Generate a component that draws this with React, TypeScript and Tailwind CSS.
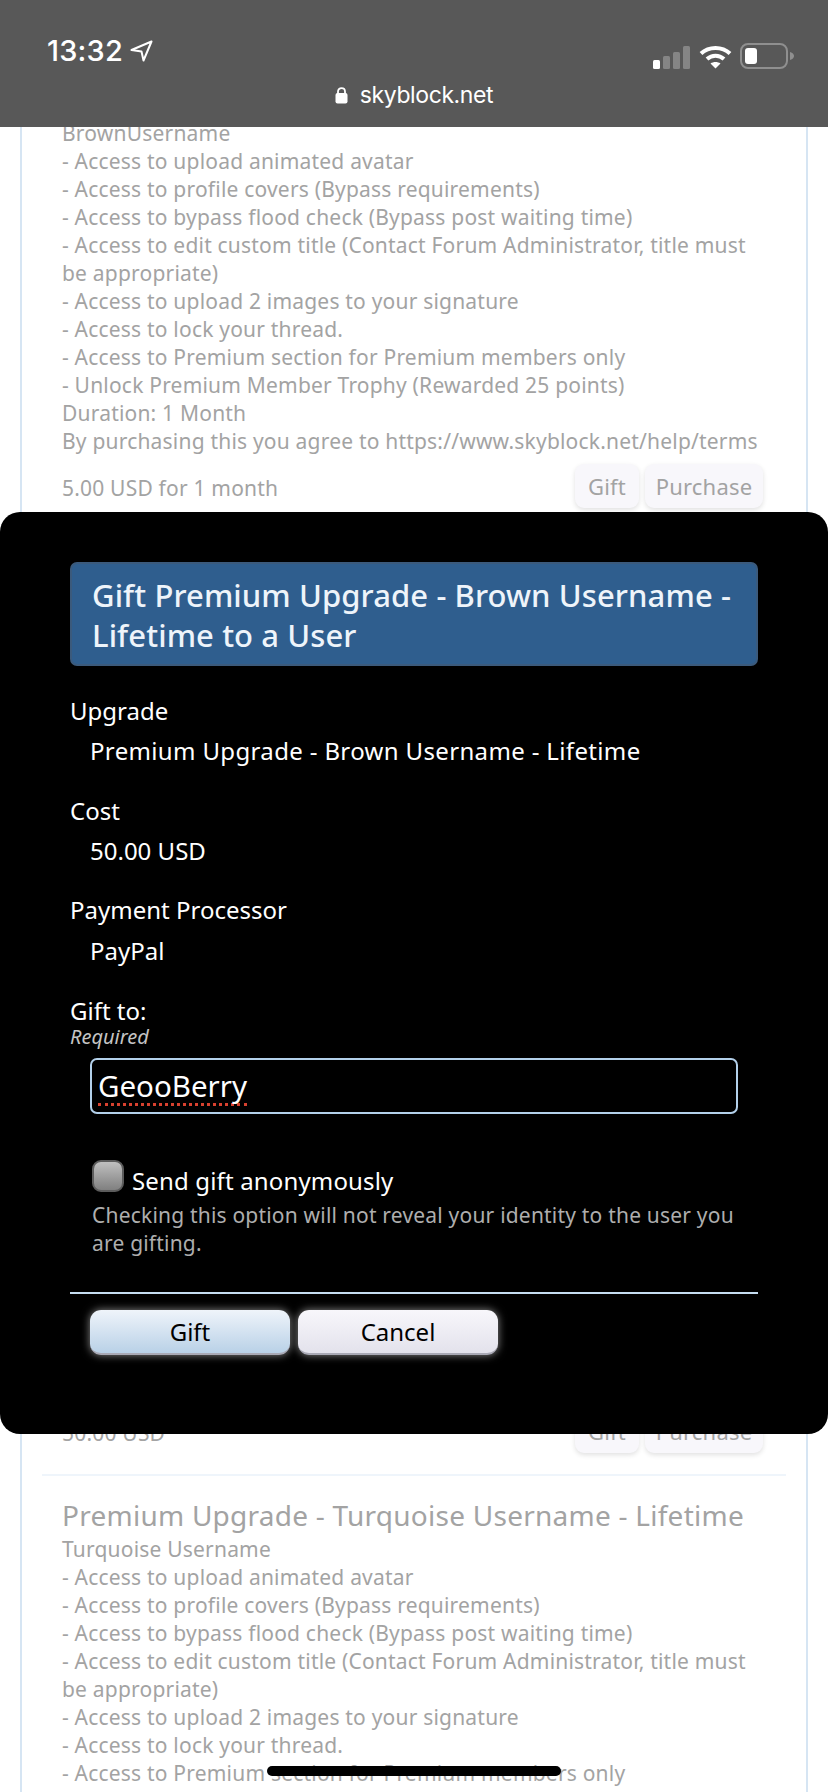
import React from "react";

const perks = [
  "- Access to upload animated avatar",
  "- Access to profile covers (Bypass requirements)",
  "- Access to bypass flood check (Bypass post waiting time)",
  "- Access to edit custom title (Contact Forum Administrator, title must be appropriate)",
  "- Access to upload 2 images to your signature",
  "- Access to lock your thread.",
  "- Access to Premium section for Premium members only",
  "- Unlock Premium Member Trophy (Rewarded 25 points)",
  "Duration: 1 Month",
  "By purchasing this you agree to https://www.skyblock.net/help/terms",
];

const StatusBar = () => (
  <div className="absolute inset-x-0 top-0 z-20 h-[127px] bg-[#585858] text-white">
    <div className="flex h-[76px] items-end justify-between pb-[7px] pl-[47px] pr-[34px]">
      <div className="flex items-center gap-[7px]">
        <span className="font-['Inter',sans-serif] text-[29px] leading-[36px] font-medium">13:32</span>
        <svg width="23" height="22" viewBox="0 0 23 22" fill="none" stroke="white" strokeWidth="2" strokeLinejoin="round">
          <path d="M21.5 1.5 L1.5 10 L11.5 11.5 L13.5 20.5 Z" />
        </svg>
      </div>
      <div className="flex items-end gap-[9px]">
        <svg width="37" height="23" viewBox="0 0 37 23">
          <rect x="0" y="14" width="7" height="9" rx="1.5" fill="white" />
          <rect x="10" y="10" width="7" height="13" rx="1.5" fill="#858585" />
          <rect x="20" y="6" width="7" height="17" rx="1.5" fill="#858585" />
          <rect x="30" y="0" width="7" height="23" rx="1.5" fill="#858585" />
        </svg>
        <svg width="33" height="25" viewBox="0 0 33 25" fill="none" stroke="white" strokeWidth="4">
          <path d="M2 9.5 C10 2 23 2 31 9.5" />
          <path d="M8 15 C13 10.5 20 10.5 25 15" />
          <path d="M16.5 24.5 L11.5 19.5 C14.5 17.5 18.5 17.5 21.5 19.5 Z" fill="white" stroke="none" />
        </svg>
        <svg width="54" height="26" viewBox="0 0 54 26" className="-ml-[1px]">
          <rect x="1" y="1" width="46" height="24" rx="7" fill="none" stroke="#8f8f8f" strokeWidth="2" />
          <rect x="5" y="5" width="12" height="16" rx="3" fill="white" />
          <path d="M50 9 C53 10 54 11.5 54 13 C54 14.5 53 16 50 17 Z" fill="#8f8f8f" />
        </svg>
      </div>
    </div>
    <div className="flex items-center justify-center gap-[12px] pt-[3px]">
      <svg width="13" height="18" viewBox="0 0 13 18" fill="none">
        <path d="M3 8 V5.5 C3 1 10 1 10 5.5 V8" stroke="white" strokeWidth="1.8" />
        <rect x="0.5" y="7" width="12" height="10.5" rx="2" fill="white" />
      </svg>
      <span className="font-['Inter',sans-serif] text-[23px] leading-[32px] tracking-[-0.4px]">skyblock.net</span>
    </div>
  </div>
);

const PerkList = () => (
  <div className="max-w-[705px]">
    {perks.map((line) => (
      <div key={line}>{line}</div>
    ))}
  </div>
);

const PriceRow = ({ price, className }: { price: string; className?: string }) => (
  <div className={`flex h-[44px] items-center justify-between pr-[3px] ${className ?? ""}`}>
    <span className="pt-[3px]">{price}</span>
    <div className="flex gap-[6px] text-[22px]">
      <div className="flex h-[44px] w-[64px] items-center justify-center rounded-[9px] bg-[#f8f7fb] shadow-[0_2px_5px_rgba(0,0,0,0.12)]">Gift</div>
      <div className="flex h-[44px] w-[118px] items-center justify-center rounded-[9px] bg-[#f8f7fb] shadow-[0_2px_5px_rgba(0,0,0,0.12)]">Purchase</div>
    </div>
  </div>
);

const GiftModal = () => (
  <div className="absolute inset-x-0 top-[512px] z-10 h-[922px] rounded-[20px] bg-black px-[70px] pt-[50px] text-[24px] leading-[28px] tracking-normal text-white">
    <h2 className="h-[104px] rounded-[7px] border-2 border-[#3b5a7c] bg-[#2f5e8e] px-[20px] py-[11px] text-[31px] leading-[40px] font-medium tracking-[0.1px] text-[#eef4fa]">
      Gift Premium Upgrade - Brown Username - Lifetime to a User
    </h2>

    <div className="mt-[31px]">Upgrade</div>
    <div className="mt-[12px] pl-[20px] tracking-[0.35px]">Premium Upgrade - Brown Username - Lifetime</div>
    <div className="mt-[32px]">Cost</div>
    <div className="mt-[12px] pl-[20px]">50.00 USD</div>
    <div className="mt-[31px]">Payment Processor</div>
    <div className="mt-[13px] pl-[20px]">PayPal</div>
    <div className="mt-[32px]">Gift to:</div>
    <div className="text-[20px] leading-[24px] text-[#c4c4c4] italic">Required</div>

    <div className="mt-[9px] ml-[20px] flex h-[56px] w-[648px] items-center rounded-[7px] border-2 border-[#b3d0ea] px-[6px] text-[29.5px]">
      <span className="mt-[2px] h-[38px] border-b-[3px] border-dotted border-[#d8412f] leading-[36px]">GeooBerry</span>
    </div>

    <div className="mt-[46px] ml-[22px] flex items-start gap-[8px]">
      <div className="h-[32px] w-[32px] rounded-[9px] border-2 border-[#5c5c5c] bg-gradient-to-b from-[#c0c0c0] to-[#808080]" />
      <span className="mt-[7px] leading-[28px] tracking-[0.15px]">Send gift anonymously</span>
    </div>
    <p className="mt-[6px] ml-[22px] w-[650px] text-[21px] leading-[28px] tracking-[0.2px] text-[#aeaeae]">
      Checking this option will not reveal your identity to the user you are gifting.
    </p>

    <div className="mt-[35px] h-[2px] bg-[#c5dcf0]" />

    <div className="mt-[16px] ml-[20px] flex gap-[8px] text-black">
      <div className="flex h-[45px] w-[200px] items-center justify-center rounded-[11px] border-b-2 border-[#a9a9b5] bg-gradient-to-b from-[#eff4fa] to-[#b9d1e7] shadow-[0_0_9px_rgba(255,255,255,0.55)]">Gift</div>
      <div className="flex h-[45px] w-[200px] items-center justify-center rounded-[11px] border-b-2 border-[#a9a9b5] bg-gradient-to-b from-[#f8f7fb] to-[#e3e2ec] shadow-[0_0_9px_rgba(255,255,255,0.55)]">Cancel</div>
    </div>
  </div>
);

export default function App() {
  return (
    <div className="relative h-[1792px] overflow-hidden bg-white font-['Noto_Sans',sans-serif] text-[21px] leading-[28px] tracking-[0.2px] text-[#a3a3a3]">
      <StatusBar />

      {/* page behind the dialog */}
      <div className="mx-[20px] min-h-full border-x-2 border-[#d6e5f3] px-[40px] pt-[119px]">
        <div>BrownUsername</div>
        <PerkList />
        <PriceRow price="5.00 USD for 1 month" className="mt-[9px]" />

        {/* covered by the dialog */}
        <div className="h-[901px]" />

        <PriceRow price="50.00 USD" />
        <div className="-mx-[20px] mt-[21px] h-[2px] bg-[#eff5fb]" />

        <h3 className="mt-[21px] text-[28px] leading-[36px] tracking-[0.25px]">Premium Upgrade - Turquoise Username - Lifetime</h3>
        <div className="mt-[2px]">Turquoise Username</div>
        <PerkList />
      </div>

      <GiftModal />

      <div className="absolute bottom-[16px] left-[267px] z-30 h-[10px] w-[294px] rounded-full bg-black" />
    </div>
  );
}
